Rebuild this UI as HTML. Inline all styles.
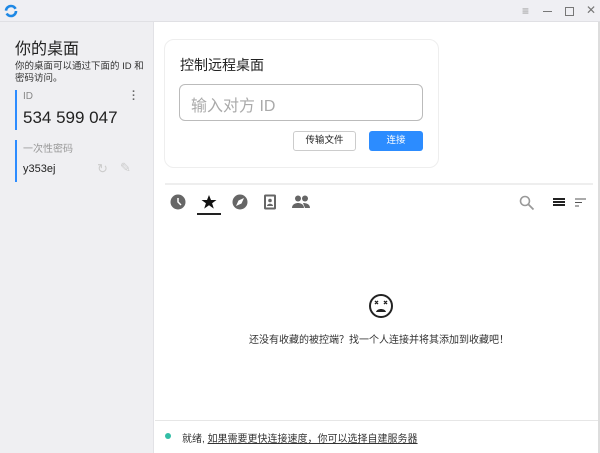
<!DOCTYPE html><html><head><meta charset="utf-8"><style>
*{margin:0;padding:0;box-sizing:border-box}
body{width:600px;height:453px;overflow:hidden;background:#fff;font-family:"Liberation Sans","Noto Sans CJK SC",sans-serif;position:relative;color:#222}
.a{position:absolute}
</style></head><body>
<div class="a" style="left:0;top:0;width:600px;height:22px;background:#efeff3;border-bottom:1px solid #e0e0e4"></div>
<svg class="a" style="left:4px;top:4px" width="14" height="14" viewBox="0 0 14 14"><circle cx="7" cy="7" r="5" fill="none" stroke="#1e88e5" stroke-width="2.6" stroke-dasharray="13 3"/></svg>
<div class="a" style="left:522px;top:4px;font-size:12px;color:#999">≡</div>
<div class="a" style="left:543px;top:11px;width:9px;height:1px;background:#777"></div>
<div class="a" style="left:565px;top:7px;width:9px;height:9px;border:1px solid #777"></div>
<div class="a" style="left:586px;top:3px;font-size:12px;color:#777">✕</div>
<div class="a" style="left:0;top:22px;width:154px;height:431px;background:#efeff2;border-right:1px solid #e2e2e6"></div>
<div class="a" style="left:598px;top:22px;width:2px;height:431px;background:#ddd"></div>
<div class="a" style="left:15px;top:35px;font-size:16px;color:#222">你的桌面</div>
<div class="a" style="left:15px;top:61px;font-size:9.5px;line-height:12px;color:#333;width:130px">你的桌面可以通过下面的 ID 和密码访问。</div>
<div class="a" style="left:15px;top:90px;width:2px;height:40px;background:#2c8cff"></div>
<div class="a" style="left:23px;top:91px;font-size:10px;color:#888">ID</div>
<div class="a" style="left:132px;top:90px;font-size:11px;color:#666;line-height:4px;font-weight:bold">·<br>·<br>·</div>
<div class="a" style="left:23px;top:108px;font-size:17px;color:#222">534 599 047</div>
<div class="a" style="left:15px;top:140px;width:2px;height:42px;background:#2c8cff"></div>
<div class="a" style="left:23px;top:140px;font-size:10px;color:#999">一次性密码</div>
<div class="a" style="left:23px;top:163px;font-size:11px;color:#222">y353ej</div>
<div class="a" style="left:97px;top:161px;font-size:13px;color:#ccc">↻</div>
<div class="a" style="left:120px;top:160px;font-size:13px;color:#ccc">✎</div>
<div class="a" style="left:164px;top:39px;width:275px;height:129px;border:1px solid #eee;border-radius:10px;background:#fff"></div>
<div class="a" style="left:180px;top:55px;font-size:14px;color:#222">控制远程桌面</div>
<div class="a" style="left:179px;top:84px;width:244px;height:37px;border:1px solid #bbb;border-radius:6px"></div>
<div class="a" style="left:191px;top:92px;font-size:16px;color:#aaa">输入对方 ID</div>
<div class="a" style="left:293px;top:131px;width:63px;height:20px;border:1px solid #ccc;border-radius:3px;font-size:9.5px;text-align:center;line-height:18px">传输文件</div>
<div class="a" style="left:369px;top:131px;width:54px;height:20px;background:#2c8cff;border-radius:3px;font-size:9.5px;color:#fff;text-align:center;line-height:20px">连接</div>
<div class="a" style="left:165px;top:183px;width:428px;height:2px;background:#eee"></div>
<svg class="a" style="left:170px;top:194px" width="120" height="20" viewBox="0 0 120 20">
<circle cx="8" cy="8" r="7.5" fill="#666"/><path d="M8 4v4l3 3" stroke="#fff" stroke-width="1.5" fill="none"/>
<path d="M39 1l2 5h5.5l-4.4 3.3 1.7 5.3-4.8-3.3-4.8 3.3 1.7-5.3L31.5 6H37z" fill="#111"/>
<circle cx="70" cy="8" r="7.5" fill="#666"/><path d="M74 4l-2.5 5.5-5.5 2.5 2.5-5.5z" fill="#fff"/>
<rect x="94" y="0.5" width="12" height="15" rx="1.5" fill="#666"/><rect x="96" y="2.5" width="8" height="11" fill="#fff"/><circle cx="100" cy="6.5" r="1.8" fill="#666"/><path d="M97 12c0-3 6-3 6 0z" fill="#666"/>
</svg>
<svg class="a" style="left:291px;top:195px" width="20" height="14" viewBox="0 0 20 14"><circle cx="7" cy="3.5" r="3" fill="#666"/><circle cx="14" cy="3.5" r="3" fill="#666"/><path d="M1 13c0-4 4-5 6-5s6 1 6 5zM12 8c3 0 7 1 7 5h-5" fill="#666"/></svg>
<div class="a" style="left:197px;top:213px;width:24px;height:2px;background:#222"></div>
<svg class="a" style="left:519px;top:195px" width="16" height="16" viewBox="0 0 16 16"><circle cx="6" cy="6" r="4.5" fill="none" stroke="#999" stroke-width="1.6"/><path d="M9.5 9.5l5 5" stroke="#999" stroke-width="1.8"/></svg>
<svg class="a" style="left:553px;top:198px" width="12" height="10" viewBox="0 0 12 10"><path d="M0 1h12M0 4h12M0 7h12" stroke="#222" stroke-width="2"/></svg>
<svg class="a" style="left:575px;top:198px" width="12" height="10" viewBox="0 0 12 10"><path d="M0 1h11M0 4.5h7M0 8h4" stroke="#555" stroke-width="1"/></svg>
<svg class="a" style="left:368px;top:293px" width="26" height="26" viewBox="0 0 26 26"><circle cx="13" cy="13" r="11" fill="none" stroke="#222" stroke-width="2"/><path d="M7 8l3 3M10 8l-3 3M16 8l3 3M19 8l-3 3" stroke="#222" stroke-width="1.4"/><path d="M8 19c1-4 9-4 10 0z" fill="#222"/></svg>
<div class="a" style="left:165px;top:331px;width:428px;text-align:center;font-size:10px;color:#333">还没有收藏的被控端？找一个人连接并将其添加到收藏吧！</div>
<div class="a" style="left:155px;top:420px;width:443px;height:1px;background:#e6e6e6"></div>
<div class="a" style="left:165px;top:433px;width:6px;height:6px;border-radius:50%;background:#32bea6"></div>
<div class="a" style="left:182px;top:430px;font-size:10px;color:#333">就绪, <span style="text-decoration:underline">如果需要更快连接速度，你可以选择自建服务器</span></div>
</body></html>
